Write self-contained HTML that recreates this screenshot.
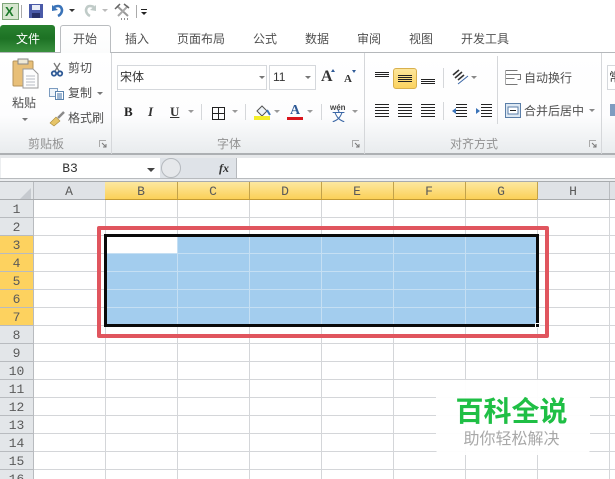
<!DOCTYPE html>
<html><head><meta charset="utf-8">
<style>
html,body{margin:0;padding:0;background:#fff}
#p{position:relative;width:615px;height:479px;overflow:hidden;background:#fff;font-family:"Liberation Sans","Noto Sans CJK SC",sans-serif;color:#444}
#p div{position:absolute}
.t{font-size:12px;line-height:16px;white-space:nowrap;color:#505050}
.g{font-size:12px;line-height:16px;white-space:nowrap;color:#929292}
.h{font-family:"Liberation Mono","Noto Serif CJK SC",monospace;font-size:13px;line-height:18px;text-align:center;color:#5a5a5a}
.lines{background:repeating-linear-gradient(#222 0 1px,transparent 1px 3px)}
.l2{background:repeating-linear-gradient(#222 0 1px,transparent 1px 2px)}
.dd{width:0;height:0;border-left:3px solid transparent;border-right:3px solid transparent;border-top:3px solid #777}
svg{position:absolute;overflow:visible}
</style></head><body><div id="p">

<!-- quick access -->
<div style="left:2px;top:3px;width:15px;height:15px;background:#d6e6cf;border:1px solid #7fa67a"></div>
<div style="left:5px;top:4px;font:bold 13px/15px 'Liberation Sans';color:#1d7a2b">X</div>
<div style="left:21px;top:5px;width:1px;height:13px;background:#aaa"></div>
<svg style="left:29px;top:4px" width="15" height="15"><rect x="0" y="0" width="14" height="14" fill="#4a5aa8"/><rect x="3" y="1" width="8" height="5" fill="#e8ecf6"/><rect x="3" y="9" width="8" height="5" fill="#27306a"/></svg>
<svg style="left:51px;top:4px" width="14" height="13"><path d="M3 3 Q10 0 11 6 Q11 10 7 12" fill="none" stroke="#3a73b8" stroke-width="2.6"/><path d="M1 1 L1 7 L7 6 Z" fill="#3a73b8"/></svg>
<div class="dd" style="left:69px;top:9px;border-top-color:#333"></div>
<svg style="left:83px;top:4px" width="14" height="13"><path d="M11 3 Q4 0 3 6 Q3 10 7 12" fill="none" stroke="#c0cbc8" stroke-width="2.6"/><path d="M13 1 L13 7 L7 6 Z" fill="#c0cbc8"/></svg>
<div class="dd" style="left:102px;top:9px;border-top-color:#bbb"></div>
<svg style="left:114px;top:3px" width="18" height="17"><path d="M3 3 L14 13" stroke="#999" stroke-width="2"/><path d="M14 3 L4 13" stroke="#aaa" stroke-width="2"/><path d="M1 6 L6 1 M10 1 L15 5" stroke="#666" stroke-width="1.500"/><path d="M7 16h1m2 0h1m2 0h1" stroke="#222"/></svg>
<div style="left:136px;top:5px;width:1px;height:13px;background:#aaa"></div>
<div style="left:141px;top:9px;width:6px;height:1px;background:#222"></div>
<div class="dd" style="left:141px;top:12px;border-top-color:#222"></div>

<!-- tab row -->
<div style="left:0;top:52px;width:615px;height:1px;background:#b5b8bb"></div>
<div style="left:0;top:25px;width:55px;height:27px;border-radius:3px 3px 0 0;background:linear-gradient(#28812f,#1d7224 50%,#39903e)"></div>
<div class="t" style="left:16px;top:31px;color:#fff;font-size:12px">文件</div>
<div style="left:60px;top:25px;width:49px;height:28px;background:linear-gradient(#fff,#fbfcfc);border:1px solid #babdc0;border-bottom:0;border-radius:3px 3px 0 0;box-sizing:content-box"></div>
<div class="t" style="left:73px;top:31px">开始</div>
<div class="t" style="left:125px;top:31px">插入</div>
<div class="t" style="left:177px;top:31px">页面布局</div>
<div class="t" style="left:253px;top:31px">公式</div>
<div class="t" style="left:305px;top:31px">数据</div>
<div class="t" style="left:357px;top:31px">审阅</div>
<div class="t" style="left:409px;top:31px">视图</div>
<div class="t" style="left:461px;top:31px">开发工具</div>

<!-- ribbon -->
<div style="left:0;top:53px;width:615px;height:100px;background:linear-gradient(#fff 0,#fdfdfe 62%,#e9ecee 100%)"></div>
<div style="left:0;top:153px;width:615px;height:2px;background:#adb0b3"></div>
<div style="left:0;top:155px;width:615px;height:3px;background:#e6e8ea"></div>
<div style="left:111px;top:53px;width:1px;height:101px;background:#d5d7da"></div>
<div style="left:364px;top:53px;width:1px;height:101px;background:#d5d7da"></div>
<div style="left:601px;top:53px;width:1px;height:101px;background:#d5d7da"></div>

<!-- clipboard -->
<svg style="left:12px;top:58px" width="28" height="31"><rect x="1" y="3" width="20" height="25" rx="1" fill="#e8bf78" stroke="#b5935a"/><rect x="6" y="1" width="10" height="5" fill="#efe9d6" stroke="#888"/><path d="M11 11 H21 L26 16 V30 H11 Z" fill="#fdfdfd" stroke="#9a9a9a"/><path d="M14 18h9M14 21h9M14 24h9M14 27h9" stroke="#b8bcc4"/></svg>
<div class="t" style="left:12px;top:95px">粘贴</div>
<div class="dd" style="left:22px;top:118px"></div>
<svg style="left:51px;top:62px" width="12" height="15"><path d="M3 1 L8 9 M9 1 L4 9" stroke="#777" stroke-width="1.300"/><circle cx="3" cy="11.500" r="2.200" fill="none" stroke="#2f5a96" stroke-width="1.800"/><circle cx="9" cy="11.500" r="2.200" fill="none" stroke="#2f5a96" stroke-width="1.800"/></svg>
<div class="t" style="left:68px;top:60px">剪切</div>
<svg style="left:49px;top:88px" width="16" height="12"><rect x=".5" y=".5" width="8" height="8" fill="#eef4fa" stroke="#7c9cc0"/><rect x="6.500" y="3.500" width="8" height="8" fill="#fff" stroke="#5b83ad"/><path d="M8 6h5M8 8h5M8 10h5" stroke="#3b6ea5"/></svg>
<div class="t" style="left:68px;top:85px">复制</div>
<div class="dd" style="left:97px;top:92px"></div>
<svg style="left:49px;top:111px" width="16" height="16"><path d="M1 12 L7 6 L11 10 L5 15 Z" fill="#e6c468" stroke="#a88a3a" stroke-width=".6"/><path d="M9 7 L15 1" stroke="#8a8a8a" stroke-width="2.500"/></svg>
<div class="t" style="left:68px;top:110px">格式刷</div>
<div class="g" style="left:28px;top:136px">剪贴板</div>
<svg style="left:99px;top:140px" width="8" height="8"><path d="M.5 7V.5H7" fill="none" stroke="#aaa"/><path d="M3 3 L7 7 M7 4V7H4" fill="none" stroke="#777"/></svg>

<!-- font -->
<div style="left:117px;top:65px;width:150px;height:25px;box-sizing:border-box;border:1px solid #d5d8dc;background:#fff"></div>
<div style="left:269px;top:65px;width:47px;height:25px;box-sizing:border-box;border:1px solid #d5d8dc;background:#fff"></div>
<div class="t" style="left:120px;top:69px;color:#333">宋体</div>
<div class="t" style="left:273px;top:69px;color:#333">11</div>
<div class="dd" style="left:259px;top:76px"></div>
<div class="dd" style="left:305px;top:76px"></div>
<div style="left:321px;top:67px;font:bold 16px/20px 'Liberation Serif';color:#333">A</div>
<div style="left:344px;top:71px;font:bold 11px/16px 'Liberation Serif';color:#333">A</div>
<div style="left:331px;top:69px;width:0;height:0;border-left:2px solid transparent;border-right:2px solid transparent;border-bottom:3px solid #2f5a96"></div>
<div style="left:352px;top:70px;width:0;height:0;border-left:2px solid transparent;border-right:2px solid transparent;border-top:3px solid #2f5a96"></div>

<div style="left:124px;top:103px;font:bold 13px/18px 'Liberation Serif';color:#222">B</div>
<div style="left:148px;top:103px;font:italic bold 13px/18px 'Liberation Serif';color:#333">I</div>
<div style="left:170px;top:103px;font:bold 13px/18px 'Liberation Serif';color:#333;text-decoration:underline">U</div>
<div class="dd" style="left:188px;top:110px;border-top-color:#999"></div>
<div style="left:201px;top:104px;width:1px;height:16px;background:#d5d7da"></div>
<svg style="left:212px;top:107px" width="13" height="13"><path d="M.5.5h12v12H.5zM6.500.5v12M.5 6.500h12" fill="none" stroke="#222"/></svg>
<div class="dd" style="left:232px;top:110px;border-top-color:#999"></div>
<div style="left:245px;top:104px;width:1px;height:16px;background:#d5d7da"></div>
<svg style="left:255px;top:104px" width="16" height="13"><path d="M2 7 L7 2 L12 7 L7 12 Z" fill="#eef3f8" stroke="#555"/><path d="M12 6 L15 11" stroke="#3a73b8" stroke-width="2"/></svg>
<div style="left:254px;top:116px;width:16px;height:4px;background:#f4ee2a"></div>
<div class="dd" style="left:274px;top:110px;border-top-color:#999"></div>
<div style="left:290px;top:102px;font:bold 14px/17px 'Liberation Serif';color:#2f5a96">A</div>
<div style="left:287px;top:117px;width:16px;height:3px;background:#d9141c"></div>
<div class="dd" style="left:307px;top:110px;border-top-color:#999"></div>
<div style="left:321px;top:104px;width:1px;height:16px;background:#d5d7da"></div>
<div style="left:330px;top:103px;font:bold 8px/10px 'Liberation Sans';color:#444">wén</div>
<div style="left:332px;top:109px;font:13px/14px 'Noto Sans CJK SC';color:#3a66a5">文</div>
<div class="dd" style="left:352px;top:110px;border-top-color:#999"></div>
<div class="g" style="left:217px;top:136px">字体</div>
<svg style="left:352px;top:140px" width="8" height="8"><path d="M.5 7V.5H7" fill="none" stroke="#aaa"/><path d="M3 3 L7 7 M7 4V7H4" fill="none" stroke="#777"/></svg>

<!-- align -->
<div class="l2" style="left:375px;top:72px;width:14px;height:6px"></div>
<div style="left:393px;top:68px;width:24px;height:21px;box-sizing:border-box;border:1px solid #d8b04e;border-radius:3px;background:linear-gradient(#fde69a,#fbd35f)"></div>
<div class="l2" style="left:398px;top:75px;width:14px;height:7px"></div>
<div class="l2" style="left:421px;top:79px;width:14px;height:6px"></div>
<div style="left:443px;top:68px;width:1px;height:20px;background:#d5d7da"></div>
<svg style="left:452px;top:69px" width="18" height="17"><path d="M1 6 L7 1 M3 9 L10 3 M6 11 L12 6" stroke="#333" stroke-width="1.600"/><path d="M6 15 L16 7" stroke="#3a66a5"/></svg>
<div class="dd" style="left:471px;top:76px;border-top-color:#888"></div>
<div style="left:497px;top:56px;width:1px;height:68px;background:#d5d7da"></div>
<div class="lines" style="left:375px;top:104px;width:14px;height:13px"></div>
<div class="lines" style="left:398px;top:104px;width:14px;height:13px"></div>
<div class="lines" style="left:421px;top:104px;width:14px;height:13px"></div>
<div style="left:443px;top:102px;width:1px;height:18px;background:#d5d7da"></div>
<div class="lines" style="left:456px;top:104px;width:11px;height:13px"></div>
<div style="left:452px;top:108px;width:0;height:0;border-top:3px solid transparent;border-bottom:3px solid transparent;border-right:4px solid #3a73b8"></div>
<div class="lines" style="left:481px;top:104px;width:11px;height:13px"></div>
<div style="left:476px;top:108px;width:0;height:0;border-top:3px solid transparent;border-bottom:3px solid transparent;border-left:4px solid #3a73b8"></div>
<svg style="left:505px;top:70px" width="17" height="16"><path d="M.5.5h12M.5 4.500h15v5h-3M.5 8.500h9M.5 14.500h12" fill="none" stroke="#777"/><path d="M.5.5v14" stroke="#aaa"/></svg>
<div class="t" style="left:524px;top:70px">自动换行</div>
<svg style="left:505px;top:103px" width="17" height="15"><rect x=".5" y=".5" width="15" height="14" fill="#dde8f3" stroke="#5a7ea8"/><rect x="3" y="4" width="10" height="7" fill="#fff" stroke="#5a7ea8"/><path d="M5 7.500h6" stroke="#222"/></svg>
<div class="t" style="left:524px;top:103px">合并后居中</div>
<div class="dd" style="left:589px;top:109px;border-top-color:#888"></div>
<div class="g" style="left:450px;top:136px">对齐方式</div>
<svg style="left:589px;top:140px" width="8" height="8"><path d="M.5 7V.5H7" fill="none" stroke="#aaa"/><path d="M3 3 L7 7 M7 4V7H4" fill="none" stroke="#777"/></svg>
<div style="left:607px;top:65px;width:12px;height:25px;box-sizing:border-box;border:1px solid #d5d8dc;background:#fff"></div>
<div class="t" style="left:609px;top:69px;color:#333">常</div>
<div style="left:610px;top:104px;width:8px;height:12px;background:#7f9cc0"></div>

<!-- formula bar -->
<div style="left:0;top:158px;width:615px;height:24px;background:#eceef0"></div>
<div style="left:1px;top:158px;width:159px;height:20px;background:#fff"></div>
<div class="h" style="left:40px;top:160px;width:60px;color:#333">B3</div>
<div class="dd" style="left:147px;top:168px;border-left-width:4px;border-right-width:4px;border-top:4px solid #444"></div>
<div style="left:160px;top:158px;width:76px;height:20px;background:#dfe3e8"></div>
<div style="left:161px;top:158px;width:20px;height:20px;border-radius:10px;background:#e6e8eb;border:1px solid #b5b9be;box-sizing:border-box"></div>
<div style="left:219px;top:160px;font:italic bold 12px/16px 'Liberation Serif';color:#333">fx</div>
<div style="left:236px;top:158px;width:1px;height:20px;background:#b6b9bd"></div>
<div style="left:237px;top:158px;width:378px;height:20px;background:#fff"></div>
<div style="left:0;top:178px;width:615px;height:1px;background:#b8bbbe"></div>
<div style="left:0;top:181px;width:615px;height:1px;background:#a8abae"></div>

<!-- grid -->
<div style="left:33px;top:200px;width:582px;height:279px;background-color:#fff;background-image:repeating-linear-gradient(to bottom,transparent 0 17px,#d4d6d9 17px 18px)"></div>
<div style="left:33px;top:200px;width:1px;height:279px;background:#b8bbbf"></div>
<div style="left:105px;top:200px;width:1px;height:279px;background:#d4d6d9"></div>
<div style="left:177px;top:200px;width:1px;height:279px;background:#d4d6d9"></div>
<div style="left:249px;top:200px;width:1px;height:279px;background:#d4d6d9"></div>
<div style="left:321px;top:200px;width:1px;height:279px;background:#d4d6d9"></div>
<div style="left:393px;top:200px;width:1px;height:279px;background:#d4d6d9"></div>
<div style="left:465px;top:200px;width:1px;height:279px;background:#d4d6d9"></div>
<div style="left:537px;top:200px;width:1px;height:279px;background:#d4d6d9"></div>
<div style="left:609px;top:200px;width:1px;height:279px;background:#d4d6d9"></div>

<!-- headers -->
<div style="left:0;top:182px;width:615px;height:18px;background:#dfe2e6"></div>
<div style="left:0;top:182px;width:33px;height:297px;background:#e3e6e9"></div>
<div style="left:20px;top:188px;width:0;height:0;border-left:11px solid transparent;border-bottom:11px solid #c6cacf"></div>
<div style="left:33px;top:182px;width:1px;height:18px;background:#b8bbbf"></div>
<div style="left:105px;top:182px;width:432px;height:18px;background:linear-gradient(#fce8a0,#fbcf54)"></div>
<div style="left:0;top:235px;width:33px;height:91px;background:#fdd25f"></div>
<div style="left:0;top:200px;width:33px;height:279px;background-image:repeating-linear-gradient(to bottom,transparent 0 17px,#b8bbbf 17px 18px)"></div>
<div class="h" style="left:33px;top:183px;width:72px">A</div>
<div class="h" style="left:105px;top:183px;width:72px">B</div>
<div class="h" style="left:177px;top:183px;width:72px">C</div>
<div class="h" style="left:249px;top:183px;width:72px">D</div>
<div class="h" style="left:321px;top:183px;width:72px">E</div>
<div class="h" style="left:393px;top:183px;width:72px">F</div>
<div class="h" style="left:465px;top:183px;width:72px">G</div>
<div class="h" style="left:537px;top:183px;width:72px">H</div>
<div style="left:177px;top:182px;width:1px;height:18px;background:#c2a24a"></div>
<div style="left:249px;top:182px;width:1px;height:18px;background:#c2a24a"></div>
<div style="left:321px;top:182px;width:1px;height:18px;background:#c2a24a"></div>
<div style="left:393px;top:182px;width:1px;height:18px;background:#c2a24a"></div>
<div style="left:465px;top:182px;width:1px;height:18px;background:#c2a24a"></div>
<div style="left:537px;top:182px;width:1px;height:18px;background:#c2a24a"></div>
<div style="left:609px;top:182px;width:1px;height:18px;background:#b8bbbf"></div>
<div style="left:0;top:199px;width:615px;height:1px;background:#a9acaf"></div>
<div style="left:105px;top:199px;width:432px;height:1px;background:#c39a33"></div>
<div class="h" style="left:0;top:201px;width:33px">1</div>
<div class="h" style="left:0;top:219px;width:33px">2</div>
<div class="h" style="left:0;top:237px;width:33px">3</div>
<div class="h" style="left:0;top:255px;width:33px">4</div>
<div class="h" style="left:0;top:273px;width:33px">5</div>
<div class="h" style="left:0;top:291px;width:33px">6</div>
<div class="h" style="left:0;top:309px;width:33px">7</div>
<div class="h" style="left:0;top:327px;width:33px">8</div>
<div class="h" style="left:0;top:345px;width:33px">9</div>
<div class="h" style="left:0;top:363px;width:33px">10</div>
<div class="h" style="left:0;top:381px;width:33px">11</div>
<div class="h" style="left:0;top:399px;width:33px">12</div>
<div class="h" style="left:0;top:417px;width:33px">13</div>
<div class="h" style="left:0;top:435px;width:33px">14</div>
<div class="h" style="left:0;top:453px;width:33px">15</div>
<div class="h" style="left:0;top:471px;width:33px">16</div>

<!-- selection -->
<div style="left:105px;top:235px;width:433px;height:91px;background:#a3cdee"></div>
<div style="left:105px;top:235px;width:72px;height:18px;background:#fff"></div>
<div style="left:105px;top:253px;width:433px;height:1px;background:#c5dff3"></div>
<div style="left:105px;top:271px;width:433px;height:1px;background:#c5dff3"></div>
<div style="left:105px;top:289px;width:433px;height:1px;background:#c5dff3"></div>
<div style="left:105px;top:307px;width:433px;height:1px;background:#c5dff3"></div>
<div style="left:177px;top:235px;width:1px;height:91px;background:#c5dff3"></div>
<div style="left:249px;top:235px;width:1px;height:91px;background:#c5dff3"></div>
<div style="left:321px;top:235px;width:1px;height:91px;background:#c5dff3"></div>
<div style="left:393px;top:235px;width:1px;height:91px;background:#c5dff3"></div>
<div style="left:465px;top:235px;width:1px;height:91px;background:#c5dff3"></div>
<div style="left:104px;top:234px;width:435px;height:93px;box-sizing:border-box;border:3px solid #0a0a0a"></div>
<div style="left:535px;top:323px;width:3px;height:3px;background:#0a0a0a;border:1px solid #fff"></div>
<div style="left:97px;top:226px;width:452px;height:112px;box-sizing:border-box;border:4px solid #e0555e;border-radius:2px"></div>

<!-- watermark -->
<div style="left:436px;top:380px;width:154px;height:75px;background:rgba(255,255,255,.95);border-radius:6px"></div>
<div style="left:436px;top:393px;width:151px;text-align:center;font:bold 28px/35px 'Noto Sans CJK SC',sans-serif;color:#1fbf45;white-space:nowrap">百科全说</div>
<div style="left:436px;top:426px;width:151px;text-align:center;font:16px/22px 'Noto Sans CJK SC',sans-serif;color:#a8a8a8;white-space:nowrap">助你轻松解决</div>
</div></body></html>
